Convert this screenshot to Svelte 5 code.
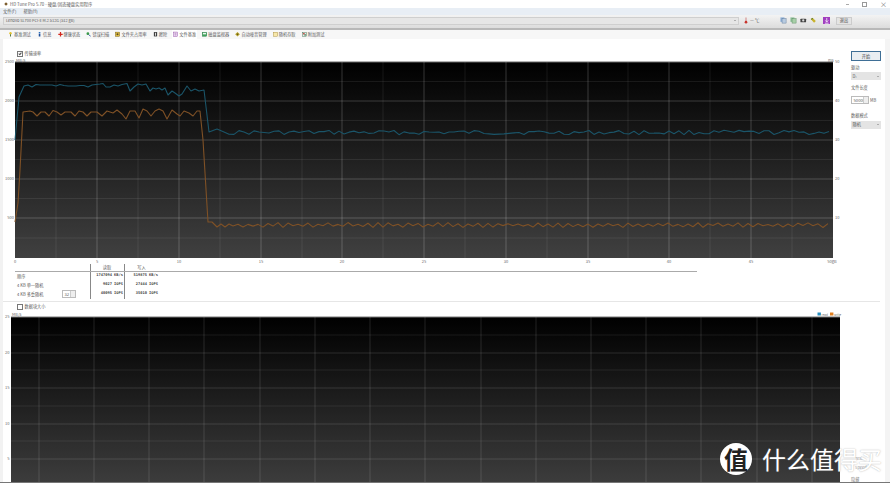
<script>
	const tabs = [
		{ name: '基准测试', icon: 'bench' },
		{ name: '信息', icon: 'info' },
		{ name: '健康状态', icon: 'health' },
		{ name: '错误扫描', icon: 'scan' },
		{ name: '文件夹占用率', icon: 'folder' },
		{ name: '擦除', icon: 'erase' },
		{ name: '文件基准', icon: 'file', active: true },
		{ name: '磁盘监视器', icon: 'monitor' },
		{ name: '自动噪音管理', icon: 'noise' },
		{ name: '随机存取', icon: 'random' },
		{ name: '附加测试', icon: 'extra' }
	];

	// small seeded generator, so both traces are the same on every run
	function ripple(seed, amp) {
		let s = seed;
		return () => {
			s = (s * 9301 + 49297) % 233280;
			return (s / 233280 - 0.5) * 2 * amp;
		};
	}

	const bluePts = [
		[15, 140], [19, 97], [24, 86], [28, 85], [32, 87], [36, 84.5], [40, 85], [44, 85], [48, 85], [52, 85],
		[56, 86], [60, 84.5], [64, 85.5], [68, 86], [72, 86], [76, 86], [80, 85.5], [84, 85.5], [88, 87], [92, 85],
		[96, 84.5], [100, 84], [103, 83.5], [106, 87], [110, 87], [114, 85], [118, 86], [122, 84.5], [127, 83.5],
		[130, 91], [134, 87], [138, 84], [142, 85], [146, 84], [150, 91], [153, 88], [156, 89], [159, 88], [162, 90],
		[165, 88], [168, 95], [172, 91], [175, 93], [179, 96], [182, 94], [187, 86], [191, 91], [195, 89], [199, 91],
		[204, 90], [209, 132], [217, 129], [224, 132]
	];
	const orangePts = [
		[15, 222], [18, 203], [20, 170], [23, 112], [30, 111], [33, 112], [37, 116], [41, 112], [45, 112], [49, 116],
		[53, 110.5], [57, 112], [61, 115], [65, 112], [71, 112], [75, 116], [79, 111], [83, 112], [87, 116], [91, 112],
		[97, 112], [102, 116], [107, 111], [113, 113], [117, 110], [122, 114], [126, 119], [130, 111], [135, 111],
		[139, 118], [143, 109], [147, 111], [151, 116], [155, 111], [159, 109], [163, 111], [167, 119], [172, 110],
		[177, 114], [180, 116], [184, 111], [189, 113], [193, 116], [197, 111], [200, 111], [203, 140], [208, 222],
		[212, 222], [217, 227], [221, 224], [225, 227], [229, 224], [233, 226]
	];

	const blueNoise = ripple(17, 2.2);
	for (let x = 229; x < 833; x += 5) {
		bluePts.push([x, 132.5 + blueNoise()]);
	}
	const orangeNoise = ripple(91, 1);
	let up = true;
	for (let x = 238; x < 833; x += 5) {
		orangePts.push([x, (up ? 223.5 : 226.5) + orangeNoise()]);
		up = !up;
	}
	const toLine = (pts) => pts.map((p) => p.join(',')).join(' ');

	// first chart frame
	const c1 = { l: 15, t: 62, r: 833, b: 258 };
	const c1Major = [97, 179, 261, 342, 424, 506, 588, 669, 751];
	const c1Minor = [56, 138, 220, 302, 383, 465, 547, 628, 710, 792];
	const c1HMajor = [101, 140, 179, 218];
	const c1HMinor = [81.5, 120.5, 159.5, 198.5, 238];
	const c1Left = [[2500, 63.4], [2000, 102.4], [1500, 141.4], [1000, 180.4], [500, 219.4]];
	const c1Right = [[50, 63.4], [40, 102.4], [30, 141.4], [20, 180.4], [10, 219.4]];
	const c1Bottom = [[0, 15], [5, 97], [10, 179], [15, 261], [20, 342], [25, 424], [30, 506], [35, 588], [40, 669], [45, 751]];

	// second chart frame, clipped by the window edge
	const c2Major = [39, 94, 149, 204, 260, 315, 370, 425, 481, 536, 591, 646, 701, 757, 812];
	const c2HMajor = [353, 388, 424, 459];
	const c2HMinor = [335, 370, 406, 441];
	const c2Left = [[25, 318.4], [20, 354.4], [15, 389.4], [10, 425.4], [5, 460.4]];
</script>

{#snippet icon(kind)}
	<svg class="tabicon" viewBox="0 0 8 8" aria-hidden="true">
		{#if kind === 'bench'}
			<circle cx="4" cy="2.4" r="1.9" fill="#e3c02d" /><rect x="3.2" y="4" width="1.6" height="3.6" fill="#5a7d3a" />
		{:else if kind === 'info'}
			<rect x="2.8" y="0.4" width="2.6" height="1.6" fill="#2a6fc0" /><rect x="2.8" y="2.8" width="2.6" height="4.8" fill="#1c4f9a" />
		{:else if kind === 'health'}
			<path d="M3 .5h2v2.5h2.5v2H5v2.5H3V5H.5V3H3z" fill="#d2281e" />
		{:else if kind === 'scan'}
			<circle cx="3" cy="3" r="2.2" fill="#3a9a4a" /><path d="M4.5 4.5l3 3" stroke="#2456a0" stroke-width="1.5" />
		{:else if kind === 'folder'}
			<rect x="0.6" y="0.6" width="6.8" height="6.8" fill="#e6c23c" stroke="#6a5520" stroke-width=".7" /><circle cx="4" cy="4" r="1.6" fill="#54472a" />
		{:else if kind === 'erase'}
			<rect x="1.4" y="0.6" width="5.2" height="6.8" fill="#2c2c2c" /><rect x="3" y="1.6" width="2" height="4.8" fill="#d8d8d8" />
		{:else if kind === 'file'}
			<rect x="1" y="0.5" width="6" height="7" fill="#f2e4f4" stroke="#8a3fa0" stroke-width=".7" /><path d="M2.5 2.5h3M2.5 4h3M2.5 5.5h3" stroke="#8a3fa0" stroke-width=".6" />
		{:else if kind === 'monitor'}
			<rect x="0.5" y="0.8" width="7" height="6.4" fill="#3da35a" stroke="#1e6a38" stroke-width=".6" /><rect x="1.6" y="1.8" width="4.8" height="2.4" fill="#e6f6ec" />
		{:else if kind === 'noise'}
			<path d="M4 .3L7.7 4 4 7.7 .3 4z" fill="#b5a02a" /><circle cx="4" cy="4" r="1.2" fill="#5c5216" />
		{:else if kind === 'random'}
			<rect x="0.6" y="0.8" width="6.8" height="6.4" fill="#f7e7a8" stroke="#a68a3a" stroke-width=".7" />
		{:else}
			<rect x="0.6" y="0.8" width="6.8" height="6.4" fill="#e8eee8" stroke="#3c6a50" stroke-width=".7" /><rect x="1.8" y="2" width="2.4" height="2.4" fill="#c0453a" /><rect x="3.8" y="4" width="2.4" height="2.2" fill="#3a7a58" />
		{/if}
	</svg>
{/snippet}

<div class="window">
	<header class="titlebar">
		<svg class="appicon" viewBox="0 0 8 8"><path d="M4 .5L7.5 4 4 7.5 .5 4z" fill="#7a5a2a" /></svg>
		<span>HD Tune Pro 5.70 - 硬盘/固态硬盘实用程序</span>
		<div class="winbtns">
			<span class="minus"></span>
			<span class="square"></span>
			<span class="close">×</span>
		</div>
	</header>

	<nav class="menubar">
		<span>文件(F)</span>
		<span>帮助(H)</span>
	</nav>

	<div class="toolbar">
		<div class="drive">
			<span>Lenovo SL700 PCI-E M.2 512G (512 gB)</span>
			<span class="caret"></span>
		</div>
		<svg class="thermo" viewBox="0 0 6 10"><rect x="2" y="0.5" width="2" height="6" fill="#d9a0a0" /><circle cx="3" cy="7.5" r="2" fill="#c8342c" /></svg>
		<span class="temp">— ℃</span>
		<div class="tools">
			<svg viewBox="0 0 8 8"><rect x=".5" y=".5" width="5" height="5.5" fill="#8fb0d8" /><rect x="2.5" y="2" width="5" height="5.5" fill="#b8cbe0" stroke="#55708f" stroke-width=".5" /></svg>
			<svg viewBox="0 0 8 8"><rect x=".5" y=".5" width="5" height="5.5" fill="#8fc09a" /><rect x="2.5" y="2" width="5" height="5.5" fill="#a8cfa8" stroke="#4f7f58" stroke-width=".5" /></svg>
			<svg viewBox="0 0 8 8"><rect x=".5" y="2" width="7" height="4.6" rx=".8" fill="#444" /><circle cx="4" cy="4.2" r="1.4" fill="#ddd" /></svg>
			<svg viewBox="0 0 8 8"><path d="M.8 2.5L3 1l4.2 4L5 7z" fill="#c8b22c" /><path d="M1 2.5l2-1.4 1 1-2 1.4z" fill="#5a7a30" /></svg>
			<svg class="save" viewBox="0 0 8 8"><rect width="8" height="8" fill="#a03ec0" /><path d="M4 1v4M2.4 3.6L4 5.4l1.6-1.8M2 6.6h4" stroke="#fff" stroke-width=".8" fill="none" /></svg>
		</div>
		<button class="exit">退出</button>
	</div>

	<div class="tabs">
		{#each tabs as tab}
			<div class="tab" class:active={tab.active}>
				{@render icon(tab.icon)}
				<span>{tab.name}</span>
			</div>
		{/each}
	</div>

	<main class="panel">
		<div class="left">
			<label class="check first"><span class="box ticked"></span>传输速率</label>

			<svg class="chart" width="850" height="206" viewBox="0 58 850 206">
				<defs>
					<linearGradient id="fade1" x1="0" y1="0" x2="0" y2="1">
						<stop offset="0" stop-color="#000" />
						<stop offset="1" stop-color="#404040" />
					</linearGradient>
				</defs>
				<rect x={c1.l} y={c1.t} width={c1.r - c1.l} height={c1.b - c1.t} fill="url(#fade1)" />
				<path d="M{c1.l} {c1.t}H{c1.r}" stroke="#666" stroke-width="1" />
				{#each c1Minor as x}<path d="M{x} {c1.t}V{c1.b}" class="minor" />{/each}
				{#each c1HMinor as y}<path d="M{c1.l} {y}H{c1.r}" class="minor" />{/each}
				{#each c1Major as x}<path d="M{x} {c1.t}V{c1.b}" class="major" />{/each}
				{#each c1HMajor as y}<path d="M{c1.l} {y}H{c1.r}" class="major" />{/each}
				<polyline points={toLine(bluePts)} class="trace blue" />
				<polyline points={toLine(orangePts)} class="trace orange" />
				<text x="16" y="61.5" class="tick">MB/s</text>
				<text x="828" y="61.5" class="tick">ms</text>
				{#each c1Left as [v, y]}<text x="14" y={y} class="tick end">{v}</text>{/each}
				{#each c1Right as [v, y]}<text x="835" y={y} class="tick">{v}</text>{/each}
				{#each c1Bottom as [v, x]}<text x={x} y="262.5" class="tick mid">{v}</text>{/each}
				<text x="832" y="262.5" class="tick mid">50gB</text>
			</svg>

			<div class="results">
				<div class="row head">
					<span class="name"></span>
					<span class="val rd">读取</span>
					<span class="val wr">写入</span>
				</div>
				<div class="row">
					<span class="name">顺序</span>
					<span class="val rd num">1747094 KB/s</span>
					<span class="val wr num">519875 KB/s</span>
				</div>
				<div class="row">
					<span class="name">4 KB 单一随机</span>
					<span class="val rd num">9027 IOPS</span>
					<span class="val wr num">27444 IOPS</span>
				</div>
				<div class="row">
					<span class="name">4 KB 多重随机<span class="spin qd">32<i></i></span></span>
					<span class="val rd num">40095 IOPS</span>
					<span class="val wr num">35010 IOPS</span>
				</div>
			</div>

			<hr class="split" />

			<label class="check second"><span class="box"></span>数据块大小</label>

			<svg class="chart" width="850" height="171" viewBox="0 311 850 171">
				<defs>
					<linearGradient id="fade2" x1="0" y1="0" x2="0" y2="1">
						<stop offset="0" stop-color="#000" />
						<stop offset="1" stop-color="#3c3c3c" />
					</linearGradient>
				</defs>
				<rect x="11" y="317" width="829" height="165" fill="url(#fade2)" />
				<path d="M11 317H840" stroke="#777" stroke-width="1" />
				{#each c2HMinor as y}<path d="M11 {y}H840" class="minor" />{/each}
				{#each c2Major as x}<path d="M{x} 317V482" class="major soft" />{/each}
				{#each c2HMajor as y}<path d="M11 {y}H840" class="major soft" />{/each}
				<text x="12" y="315.5" class="tick">MB/s</text>
				{#each c2Left as [v, y]}<text x="9.5" y={y} class="tick end">{v}</text>{/each}
				<rect x="817.5" y="312.5" width="3.4" height="3" fill="#2a8fc0" />
				<text x="821.5" y="315.5" class="tick small">read</text>
				<rect x="830" y="312.5" width="3.4" height="3" fill="#e08020" />
				<text x="834" y="315.5" class="tick small">write</text>
			</svg>
		</div>

		<aside class="side">
			<button class="start">开始</button>
			<span class="lbl">驱动</span>
			<div class="select">D:<span class="caret"></span></div>
			<span class="lbl">文件长度</span>
			<div class="sizebox"><span class="spin long">50000<i></i></span>MB</div>
			<span class="lbl">数据模式</span>
			<div class="select">随机<span class="caret"></span></div>
			<div class="grow"></div>
			<span class="faint">Test</span>
			<span class="faint">Speed</span>
			<span class="lbl tail">隐藏</span>
		</aside>
	</main>
	<div class="bottom"></div>

	<div class="mark">
		<span class="badge">值</span>
		<span class="brand">什么值得买</span>
	</div>
</div>

<style>
	:global(body) {
		margin: 0;
		background: #fff;
	}

	.window {
		position: relative;
		width: 890px;
		height: 487px;
		overflow: hidden;
		display: flex;
		flex-direction: column;
		font-family: 'Noto Sans CJK SC', 'Liberation Sans', sans-serif;
		font-size: 4.2px;
		line-height: 1;
		color: #5a5a5a;
		background: #f4f4f4;
	}

	.titlebar {
		height: 8px;
		flex: none;
		display: flex;
		align-items: center;
		gap: 2px;
		padding-left: 4px;
		background: #fff;
		font-size: 4.3px;
	}
	.appicon {
		width: 4px;
		height: 4px;
	}
	.winbtns {
		margin-left: auto;
		display: flex;
		align-items: center;
		gap: 13px;
		padding-right: 3px;
		color: #777;
	}
	.minus {
		width: 3px;
		height: 1px;
		background: #aaa;
	}
	.square {
		width: 3px;
		height: 3px;
		border: 0.6px solid #999;
	}
	.close {
		font-size: 7px;
	}

	.menubar {
		height: 7px;
		flex: none;
		display: flex;
		align-items: center;
		gap: 7px;
		padding-left: 3px;
		background: #e8eef5;
	}

	.toolbar {
		height: 15px;
		flex: none;
		box-sizing: border-box;
		display: flex;
		align-items: center;
		padding: 0 0 2px 3px;
		background: linear-gradient(#f3f3f3, #dcdcdc);
		border-bottom: 2px solid #b8b8b8;
	}
	.drive {
		width: 736px;
		height: 8px;
		box-sizing: border-box;
		display: flex;
		align-items: center;
		justify-content: space-between;
		padding: 0 2px;
		background: #e6e6e6;
		border: 0.5px solid #cfcfcf;
		margin-right: 5px;
		font-size: 3.9px;
	}
	.caret {
		width: 0;
		height: 0;
		border-left: 1.5px solid transparent;
		border-right: 1.5px solid transparent;
		border-top: 1.5px solid #777;
	}
	.thermo {
		width: 4px;
		height: 7px;
	}
	.temp {
		margin: 0 0 0 2px;
		width: 30px;
		font-size: 4.4px;
	}
	.tools {
		display: flex;
		gap: 3.5px;
		width: 56px;
		align-items: center;
	}
	.tools svg {
		width: 6.5px;
		height: 6.5px;
	}
	.tools .save {
		margin-left: 2.5px;
		width: 7.5px;
		height: 7.5px;
	}
	.exit {
		width: 16px;
		height: 8px;
		padding: 0;
		font: inherit;
		color: #444;
		background: #e4e4e4;
		border: 0.5px solid #ccc;
	}

	.tabs {
		height: 9px;
		flex: none;
		display: flex;
		align-items: center;
		gap: 4.2px;
		padding-left: 7px;
		background: #f7f7f7;
	}
	.tab {
		display: flex;
		align-items: center;
		gap: 1px;
		height: 9px;
		padding: 0 1px;
	}
	.tab.active {
		background: #fff;
	}
	.tabicon {
		width: 5px;
		height: 6.5px;
	}

	.panel {
		flex: 1;
		min-height: 0;
		display: flex;
		background: #fff;
		margin-right: 5px;
		box-shadow: inset 3px 0 #f2f2f2;
	}
	.left {
		width: 848px;
		flex: none;
		display: flex;
		flex-direction: column;
	}

	.check {
		display: flex;
		align-items: center;
		gap: 1.5px;
		padding-left: 17px;
		height: 9px;
		flex: none;
	}
	.check.first {
		margin-top: 10px;
	}
	.box {
		width: 4px;
		height: 4px;
		border: 0.6px solid #777;
		background: #fff;
		position: relative;
	}
	.box.ticked::after {
		content: '';
		position: absolute;
		left: 0.8px;
		top: 0.3px;
		width: 1.2px;
		height: 2.2px;
		border: solid #555;
		border-width: 0 0.6px 0.6px 0;
		transform: rotate(40deg);
	}

	.chart {
		display: block;
		flex: none;
		overflow: hidden;
	}
	.chart .major {
		stroke: rgba(255, 255, 255, 0.2);
		stroke-width: 1;
	}
	.chart .major.soft {
		stroke: rgba(255, 255, 255, 0.13);
	}
	.chart .minor {
		stroke: rgba(255, 255, 255, 0.08);
		stroke-width: 1;
	}
	.trace {
		fill: none;
		stroke-width: 1.1;
		stroke-linejoin: round;
	}
	.trace.blue {
		stroke: #1b5569;
	}
	.trace.orange {
		stroke: #7f5126;
	}
	.tick {
		font-size: 4px;
		fill: #6a6a6a;
	}
	.tick.end {
		text-anchor: end;
	}
	.tick.mid {
		text-anchor: middle;
	}
	.tick.small {
		font-size: 3px;
	}

	.results {
		height: 34px;
		flex: none;
		display: flex;
		flex-direction: column;
		font-size: 4.2px;
	}
	.row {
		display: flex;
		align-items: center;
		height: 9px;
		flex: none;
	}
	.row.head {
		height: 6.5px;
		flex: none;
		border-bottom: 1px solid #aaa;
		width: 682px;
		margin-left: 15px;
	}
	.row.head .name {
		width: 75px;
	}
	.name {
		width: 90px;
		flex: none;
		box-sizing: border-box;
		padding: 0 14px 0 17px;
		display: flex;
		align-items: center;
		justify-content: space-between;
	}
	.val {
		flex: none;
		height: 100%;
		display: flex;
		align-items: center;
		justify-content: flex-end;
		box-sizing: border-box;
		border-left: 1px solid #888;
		padding-right: 1px;
	}
	.val.rd {
		width: 34px;
	}
	.val.wr {
		width: 35px;
	}
	.head .val {
		justify-content: center;
	}
	.num {
		font-family: 'DejaVu Sans Mono', 'Liberation Mono', monospace;
		font-weight: 700;
		font-size: 3.7px;
		color: #444;
	}

	.spin {
		position: relative;
		display: inline-block;
		box-sizing: border-box;
		border: 0.5px solid #bbb;
		background: #fff;
		line-height: 7px;
		padding-left: 1.5px;
	}
	.spin i {
		position: absolute;
		right: 0;
		top: 0;
		bottom: 0;
		width: 4px;
		background: #eee;
		border-left: 0.5px solid #ccc;
	}
	.spin.qd {
		width: 14px;
		height: 8.5px;
	}
	.spin.long {
		width: 18px;
		height: 8px;
		font-size: 4.2px;
	}

	.split {
		margin: 3px 0 0 3px;
		border: none;
		height: 1px;
		flex: none;
		background: #e6e6e6;
		width: 877px;
	}

	.side {
		flex: 1;
		display: flex;
		flex-direction: column;
		align-items: flex-start;
		padding: 12px 0 0 3px;
		position: relative;
		z-index: 1;
	}
	.start {
		width: 30px;
		height: 9.5px;
		flex: none;
		padding: 0;
		font: inherit;
		color: #444;
		background: #e9eef2;
		border: 1px solid #3f6f96;
		margin-bottom: 3px;
	}
	.lbl {
		height: 6px;
		line-height: 6px;
		margin-bottom: 2.5px;
	}
	.select {
		width: 30px;
		height: 8px;
		flex: none;
		box-sizing: border-box;
		display: flex;
		align-items: center;
		justify-content: space-between;
		padding: 0 2px 0 1.5px;
		background: #e4e4e4;
		margin-bottom: 4px;
	}
	.sizebox {
		display: flex;
		align-items: center;
		gap: 1px;
		height: 8px;
		flex: none;
		margin: 3.5px 0 8px;
	}
	.grow {
		flex: 1;
	}
	.faint {
		font-size: 4px;
		color: #999;
		height: 9px;
		flex: none;
		margin-left: 4px;
	}
	.tail {
		margin: 2px 0 0;
		color: #888;
	}

	.bottom {
		height: 5px;
		flex: none;
		background: #fff;
		border-top: 1px solid #777;
		box-sizing: border-box;
	}

	.mark {
		position: absolute;
		left: 720px;
		top: 443px;
		display: flex;
		align-items: center;
		gap: 10px;
		z-index: 2;
	}
	.badge {
		width: 32px;
		height: 32px;
		border-radius: 50%;
		background: #fff;
		color: #222;
		display: flex;
		align-items: center;
		justify-content: center;
		font-size: 24px;
		font-weight: 700;
	}
	.brand {
		font-size: 24px;
		color: #fff;
		text-shadow: 0 0 1.5px rgba(110, 110, 110, 0.6);
	}
</style>
